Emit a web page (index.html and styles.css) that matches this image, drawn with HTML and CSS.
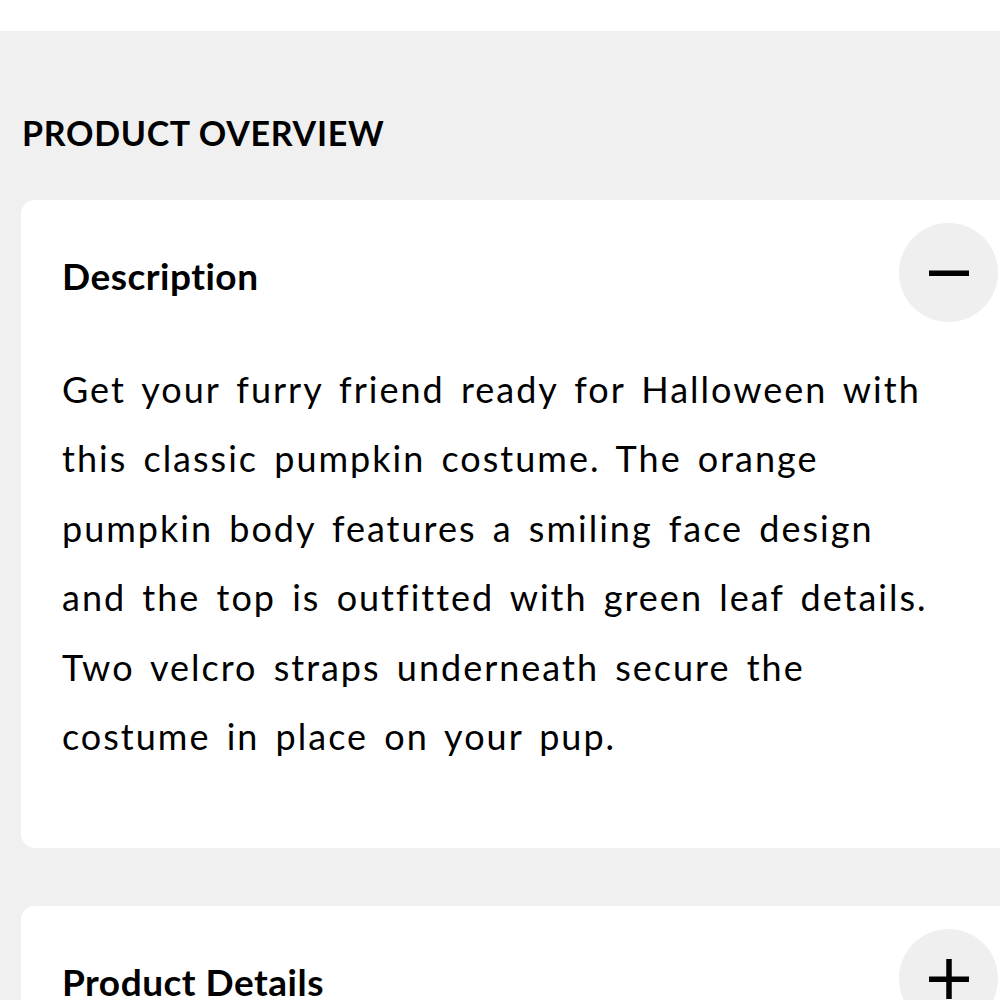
FILE: index.html
```html
<!DOCTYPE html>
<html lang="en">
<head>
<meta charset="utf-8">
<title>Product Overview</title>
<link rel="stylesheet" href="styles.css">
</head>
<body>
<div class="topbar"></div>
<main class="page">
  <h2 class="section-title">PRODUCT OVERVIEW</h2>
  <section class="card">
    <div class="card-head">
      <h3 class="card-title">Description</h3>
      <button class="toggle" aria-label="Collapse">
        <svg width="40" height="40" viewBox="0 0 40 40"><rect x="0" y="17.5" width="40" height="5.5" fill="#000"/></svg>
      </button>
    </div>
    <p class="card-body">Get your furry friend ready for Halloween with this classic pumpkin costume. The orange pumpkin body features a smiling face design and the top is outfitted with green leaf details. Two velcro straps underneath secure the costume in place on your pup.</p>
  </section>
  <section class="card">
    <div class="card-head">
      <h3 class="card-title">Product Details</h3>
      <button class="toggle" aria-label="Expand">
        <svg width="40" height="40" viewBox="0 0 40 40"><rect x="0" y="17.5" width="40" height="5.5" fill="#000"/><rect x="17.25" y="0" width="5.5" height="40" fill="#000"/></svg>
      </button>
    </div>
  </section>
</main>
</body>
</html>
```
FILE: styles.css
```css
html, body {
  margin: 0;
  padding: 0;
  overflow: hidden;
  background: #f0f0f0;
}
body {
  font-family: Lato, "Noto Sans", sans-serif;
  color: #000;
  width: 1000px;
  height: 1000px;
}
.topbar {
  height: 31px;
  background: #fff;
}
.page {
  width: 1019px;
  padding: 0 0 0 21px;
}
.section-title {
  margin: 0;
  padding: 77px 0 0 1px;
  height: 92px;
  font-size: 34px;
  font-weight: 700;
  line-height: 50px;
  letter-spacing: 0.7px;
}
.card {
  background: #fff;
  border-radius: 14px;
  padding: 23px 42px 0 41px;
  margin-bottom: 58px;
}
.card:first-of-type {
  height: 625px;
}
.card-head {
  display: flex;
  align-items: center;
  justify-content: space-between;
  height: 99px;
}
.card-title {
  margin: 0;
  padding-top: 6px;
  font-size: 37px;
  font-weight: 700;
  line-height: 40px;
  letter-spacing: 0.5px;
}
.toggle {
  width: 99px;
  height: 99px;
  border-radius: 50%;
  border: none;
  background: #efefef;
  display: flex;
  align-items: center;
  justify-content: center;
  padding: 0;
}
.card-body {
  margin: 33px 0 0 0;
  width: 883px;
  font-size: 36px;
  line-height: 69.4px;
  letter-spacing: 2px;
  word-spacing: 5px;
}
```
